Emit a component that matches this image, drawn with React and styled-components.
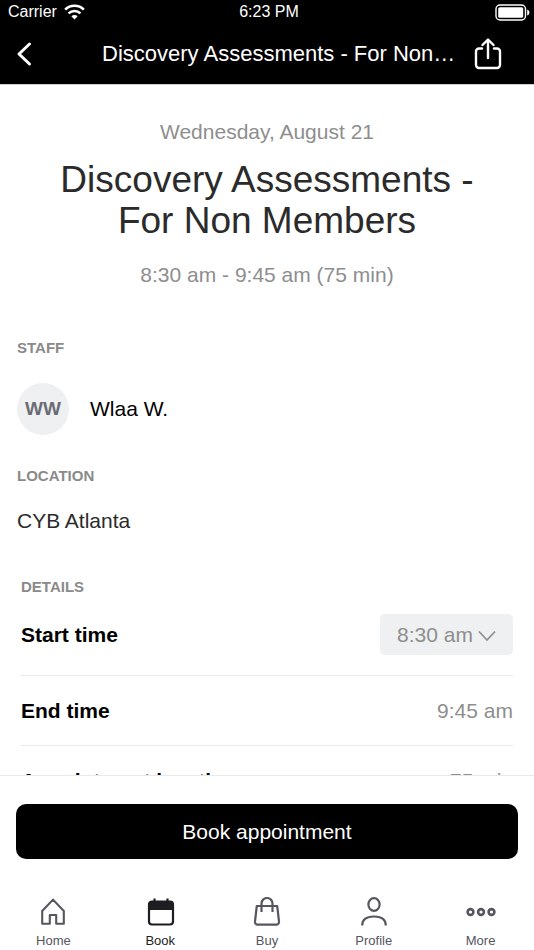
import React, { useState } from "react";
import styled, { createGlobalStyle } from "styled-components";

const GlobalStyle = createGlobalStyle`
  * {
    box-sizing: border-box;
  }
  body {
    margin: 0;
    background-color: #fff;
    font-family: "Liberation Sans", Arial, sans-serif;
  }
  h1, h2, p {
    margin: 0;
  }
  button, select {
    font-family: inherit;
  }
`;

const startTimes = ["8:30 am", "9:00 am", "9:30 am"];

const tabs = [
  { name: "Home", Icon: HomeIcon },
  { name: "Book", Icon: BookIcon },
  { name: "Buy", Icon: BuyIcon },
  { name: "Profile", Icon: ProfileIcon },
  { name: "More", Icon: MoreIcon },
];

export default function App() {
  const [startTime, setStartTime] = useState("8:30 am");
  const [activeTab, setActiveTab] = useState("Book");

  return (
    <Screen>
      <GlobalStyle />
      <Header>
        <StatusBar>
          <Carrier>
            Carrier
            <WifiIcon />
          </Carrier>
          <span>6:23 PM</span>
          <BatteryIcon />
        </StatusBar>
        <NavBar>
          <IconButton aria-label="Back">
            <BackIcon />
          </IconButton>
          <NavTitle>Discovery Assessments - For Non…</NavTitle>
          <IconButton aria-label="Share">
            <ShareIcon />
          </IconButton>
        </NavBar>
      </Header>

      <Content>
        <Summary>
          <Muted>Wednesday, August 21</Muted>
          <Title>Discovery Assessments - For Non Members</Title>
          <Muted>8:30 am - 9:45 am (75 min)</Muted>
        </Summary>

        <Section>
          <SectionLabel>STAFF</SectionLabel>
          <Staff>
            <Avatar>WW</Avatar>
            <span>Wlaa W.</span>
          </Staff>
        </Section>

        <Section>
          <SectionLabel>LOCATION</SectionLabel>
          <Location>CYB Atlanta</Location>
        </Section>

        <Details>
          <SectionLabel>DETAILS</SectionLabel>
          <Row $tall>
            <RowLabel as="label" htmlFor="start-time">
              Start time
            </RowLabel>
            <SelectBox>
              <TimeSelect
                id="start-time"
                value={startTime}
                onChange={(event) => setStartTime(event.target.value)}
              >
                {startTimes.map((time) => (
                  <option key={time}>{time}</option>
                ))}
              </TimeSelect>
              <ChevronIcon />
            </SelectBox>
          </Row>
          <Row>
            <RowLabel>End time</RowLabel>
            <Muted>9:45 am</Muted>
          </Row>
          <Row>
            <RowLabel>Appointment location</RowLabel>
            <Muted>75 min</Muted>
          </Row>
        </Details>
      </Content>

      <Footer>
        <BookButton>Book appointment</BookButton>
        <TabBar>
          {tabs.map(({ name, Icon }) => (
            <Tab
              key={name}
              $active={name === activeTab}
              onClick={() => setActiveTab(name)}
            >
              <Icon />
              {name}
            </Tab>
          ))}
        </TabBar>
      </Footer>
    </Screen>
  );
}

function WifiIcon() {
  return (
    <svg width="21" height="16" viewBox="0 0 22 16" fill="none" stroke="#fff" strokeWidth="2.6">
      <path d="M1.2 5.4a14 14 0 0 1 19.6 0" />
      <path d="M4.8 9.4a8.8 8.8 0 0 1 12.4 0" />
      <path d="M11 15.8 7.7 12.5a4.7 4.7 0 0 1 6.6 0z" fill="#fff" stroke="none" />
    </svg>
  );
}

function BatteryIcon() {
  return (
    <svg width="35" height="17" viewBox="0 0 35 17" fill="none">
      <rect x="1" y="1" width="29.5" height="15" rx="4" stroke="#fff" strokeWidth="1.4" />
      <rect x="3.2" y="3.2" width="25" height="10.6" rx="1.6" fill="#fff" />
      <path d="M32.2 5.5c1.6.7 2.2 1.7 2.2 3s-.6 2.3-2.2 3z" fill="#fff" />
    </svg>
  );
}

function BackIcon() {
  return (
    <svg width="16" height="26" viewBox="0 0 16 26" fill="none">
      <path d="M13.5 3 3 13l10.5 10" stroke="#fff" strokeWidth="3" strokeLinecap="round" strokeLinejoin="round" />
    </svg>
  );
}

function ShareIcon() {
  return (
    <svg width="28" height="32" viewBox="0 0 28 32" fill="none" stroke="#fff" strokeWidth="2.4" strokeLinecap="round" strokeLinejoin="round">
      <path d="M8 10.5H5a3 3 0 0 0-3 3V27a3 3 0 0 0 3 3h18a3 3 0 0 0 3-3V13.5a3 3 0 0 0-3-3h-3" />
      <path d="M14 20V2M8.5 7 14 1.5 19.5 7" />
    </svg>
  );
}

function ChevronIcon() {
  return (
    <Chevron width="18" height="12" viewBox="0 0 18 12" fill="none">
      <path d="M1 1.5l8 8.5 8-8.5" stroke="#8e8e8e" strokeWidth="1.7" />
    </Chevron>
  );
}

function HomeIcon() {
  return (
    <svg width="30" height="30" viewBox="0 0 30 30" fill="none" stroke="currentColor" strokeWidth="2.1" strokeLinejoin="round">
      <path d="M4.2 14 15 2.6 25.8 14v12.8h-7.6V18h-6.4v8.8H4.2z" />
    </svg>
  );
}

function BookIcon() {
  return (
    <svg width="30" height="30" viewBox="0 0 30 30" fill="none" stroke="currentColor" strokeWidth="2.2">
      <rect x="4" y="4.5" width="24" height="23" rx="3" />
      <path d="M4 13V7a3 3 0 0 1 3-3h18a3 3 0 0 1 3 3v6z" fill="currentColor" stroke="none" />
      <path d="M9.5 1.500v5M22.5 1.500v5" />
    </svg>
  );
}

function BuyIcon() {
  return (
    <svg width="30" height="30" viewBox="0 0 30 30" fill="none" stroke="currentColor" strokeWidth="2.2" strokeLinejoin="round">
      <path d="M4.8 9h20.4L27 24.5a2.8 2.8 0 0 1-2.8 3.2H5.8A2.8 2.8 0 0 1 3 24.5z" />
      <path d="M9.5 15V6.5a5.5 5.5 0 0 1 11 0V15" />
    </svg>
  );
}

function ProfileIcon() {
  return (
    <svg width="30" height="30" viewBox="0 0 30 30" fill="none" stroke="currentColor" strokeWidth="2.2">
      <ellipse cx="15" cy="7.5" rx="5.6" ry="6.4" />
      <path d="M3.2 28.5c0-6.500 4.8-9 11.8-9s11.8 2.5 11.8 9" />
    </svg>
  );
}

function MoreIcon() {
  return (
    <svg width="30" height="30" viewBox="0 0 30 30" fill="none" stroke="currentColor" strokeWidth="2.6">
      <circle cx="4.5" cy="15" r="2.9" />
      <circle cx="15" cy="15" r="2.9" />
      <circle cx="25.5" cy="15" r="2.9" />
    </svg>
  );
}

const Screen = styled.div`
  display: flex;
  flex-direction: column;
  height: 100vh;
`;

const Header = styled.header`
  flex-shrink: 0;
  background-color: #000;
  color: #fff;
  border-bottom: 1px solid #d0d0d0;
`;

const StatusBar = styled.div`
  display: grid;
  grid-template-columns: 1fr auto 1fr;
  align-items: center;
  height: 24px;
  padding: 0 4px 0 8px;
  font-size: 16px;

  > svg {
    justify-self: end;
  }
`;

const Carrier = styled.div`
  display: flex;
  align-items: center;
  gap: 7px;
`;

const NavBar = styled.div`
  display: flex;
  align-items: center;
  height: 60px;
  padding: 0 32px 0 16px;
`;

const IconButton = styled.button`
  display: flex;
  flex-shrink: 0;
  padding: 0;
  border: none;
  background: none;
`;

const NavTitle = styled.div`
  flex: 1;
  margin: 0 8px 0 70px;
  font-size: 22px;
  white-space: nowrap;
  overflow: hidden;
  text-overflow: ellipsis;
`;

// scrolls under the footer
const Content = styled.main`
  flex: 1;
  min-height: 0;
  overflow-y: auto;
  scrollbar-width: none;
  padding: 35px 17px 0;
`;

const Summary = styled.div`
  margin-bottom: 52px;
  text-align: center;
`;

const Muted = styled.p`
  font-size: 21px;
  line-height: 24px;
  color: #8e8e8e;
`;

const Title = styled.h1`
  margin: 15px 24px 22px;
  font-size: 37px;
  font-weight: normal;
  line-height: 41px;
  color: #2b2b2b;
`;

const Section = styled.section`
  margin-bottom: 32px;
`;

const SectionLabel = styled.h2`
  font-size: 15px;
  line-height: 18px;
  color: #8a8a8a;
`;

const Staff = styled.div`
  display: flex;
  align-items: center;
  gap: 21px;
  margin-top: 26px;
  font-size: 21px;
  color: #000;
`;

const Avatar = styled.div`
  display: flex;
  align-items: center;
  justify-content: center;
  width: 52px;
  height: 52px;
  border-radius: 50%;
  background-color: #eff0f2;
  font-size: 19px;
  font-weight: bold;
  color: #6a6c75;
`;

const Location = styled.p`
  margin-top: 24px;
  font-size: 21px;
  line-height: 24px;
  color: #2b2b2b;
`;

const Details = styled.section`
  margin-top: 45px;
  padding: 0 4px;
`;

const Row = styled.div`
  display: flex;
  align-items: center;
  justify-content: space-between;
  height: ${(props) => (props.$tall ? 80 : 70)}px;
  padding-bottom: ${(props) => (props.$tall ? 2 : 0)}px;
  border-bottom: 1px solid #e9e9eb;
`;

const RowLabel = styled.span`
  font-size: 21px;
  line-height: 24px;
  font-weight: bold;
  color: #000;
`;

const SelectBox = styled.div`
  position: relative;
`;

const TimeSelect = styled.select`
  appearance: none;
  display: block;
  width: 133px;
  height: 41px;
  padding: 0 17px;
  border: none;
  border-radius: 5px;
  background-color: #eff0f2;
  font-size: 21px;
  color: #8e8e8e;
`;

// sits over the select in place of its own arrow
const Chevron = styled.svg`
  position: absolute;
  right: 17px;
  top: 16px;
  pointer-events: none;
`;

const Footer = styled.footer`
  flex-shrink: 0;
  border-top: 1px solid #e9e9eb;
  padding-top: 28px;
`;

const BookButton = styled.button`
  display: block;
  width: calc(100% - 32px);
  height: 55px;
  margin: 0 16px;
  border: none;
  border-radius: 10px;
  background-color: #000;
  font-size: 21px;
  color: #fff;
`;

const TabBar = styled.nav`
  display: flex;
  padding: 38px 0 1px;
`;

const Tab = styled.button`
  flex: 1;
  display: flex;
  flex-direction: column;
  align-items: center;
  gap: 6px;
  padding: 0;
  border: none;
  background: none;
  font-size: 13px;
  line-height: 16px;
  color: ${(props) => (props.$active ? "#1d1e22" : "#55565f")};
`;
